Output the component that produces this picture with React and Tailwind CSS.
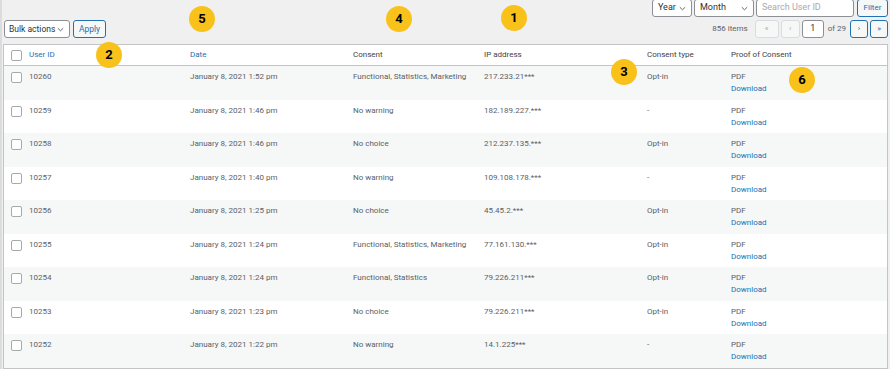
import React from 'react';

const rows = [
  { id: '10260', date: 'January 8, 2021 1:52 pm', consent: 'Functional, Statistics, Marketing', ip: '217.233.21***', type: 'Opt-in' },
  { id: '10259', date: 'January 8, 2021 1:46 pm', consent: 'No warning', ip: '182.189.227.***', type: '-' },
  { id: '10258', date: 'January 8, 2021 1:46 pm', consent: 'No choice', ip: '212.237.135.***', type: 'Opt-in' },
  { id: '10257', date: 'January 8, 2021 1:40 pm', consent: 'No warning', ip: '109.108.178.***', type: '-' },
  { id: '10256', date: 'January 8, 2021 1:25 pm', consent: 'No choice', ip: '45.45.2.***', type: 'Opt-in' },
  { id: '10255', date: 'January 8, 2021 1:24 pm', consent: 'Functional, Statistics, Marketing', ip: '77.161.130.***', type: 'Opt-in' },
  { id: '10254', date: 'January 8, 2021 1:24 pm', consent: 'Functional, Statistics', ip: '79.226.211***', type: 'Opt-in' },
  { id: '10253', date: 'January 8, 2021 1:23 pm', consent: 'No choice', ip: '79.226.211***', type: 'Opt-in' },
  { id: '10252', date: 'January 8, 2021 1:22 pm', consent: 'No warning', ip: '14.1.225***', type: '-' },
];

// numbered callouts laid over the screenshot
const badges = [
  { n: '1', cls: 'left-[499px] top-[5px]' },
  { n: '2', cls: 'left-[94px] top-[42px]' },
  { n: '3', cls: 'left-[609px] top-[59px]' },
  { n: '4', cls: 'left-[384px] top-[6px]' },
  { n: '5', cls: 'left-[187px] top-[6px]' },
  { n: '6', cls: 'left-[787px] top-[67px]' },
];

const Check = () => (
  <span className="block w-[11px] h-[11px] rounded-[2px] border border-[#a7aaad] bg-white" />
);

const Chevron = () => (
  <svg width="7" height="5" viewBox="0 0 7 5" className="ml-auto shrink-0">
    <path d="M0.8 1.2 L3.5 3.8 L6.2 1.2" fill="none" stroke="#50575e" strokeWidth="0.9" />
  </svg>
);

const App = () => {
  return (
    <div className="relative w-[890px] h-[369px] overflow-hidden bg-[#f0f0f1] text-[8px] text-[#5b6167] border-l-2 border-[#dcdcde]" style={{ fontFamily: 'Roboto, "Liberation Sans", sans-serif' }}>
      {/* toolbar */}
      <div className="flex justify-between h-[44px] pl-[2px] pr-[2px] text-[9px] whitespace-nowrap">
        <div className="flex items-start gap-[3px] pt-[20px]">
          <div className="flex items-center w-[66px] h-[18px] pl-[4px] pr-[5px] gap-[2px] bg-white border border-[#8c8f94] rounded-[3px] text-[#2c3338] text-[8.5px]">
            Bulk actions
            <Chevron />
          </div>
          <div className="flex items-center justify-center w-[33px] h-[18px] border border-[#2271b1] rounded-[3px] text-[#2271b1] bg-[#f6f7f7] text-[8.5px]">Apply</div>
        </div>
        <div className="flex flex-col items-end gap-[3px] -mt-[1px]">
          <div className="flex gap-[2px] h-[18px]">
            <div className="flex items-center w-[40px] px-[5px] bg-white border border-[#8c8f94] rounded-[3px] text-[#2c3338]">Year<Chevron /></div>
            <div className="flex items-center w-[60px] px-[5px] bg-white border border-[#8c8f94] rounded-[3px] text-[#2c3338]">Month<Chevron /></div>
            <div className="flex items-center w-[98px] px-[5px] bg-white border border-[#8c8f94] rounded-[3px] text-[#a7aaad]">Search User ID</div>
            <div className="flex items-center justify-center w-[31px] ml-[1px] border border-[#2271b1] rounded-[3px] text-[#2271b1] bg-[#f6f7f7] text-[8px]">Filter</div>
          </div>
          <div className="flex items-center gap-[2px] h-[18px] text-[8px]">
            <span className="mr-[5px]">856 items</span>
            <div className="flex items-center justify-center w-[24px] h-[18px] border border-[#dcdcde] rounded-[3px] bg-[#f6f7f7] text-[#a7aaad]">«</div>
            <div className="flex items-center justify-center w-[19px] h-[18px] border border-[#dcdcde] rounded-[3px] bg-[#f6f7f7] text-[#a7aaad]">‹</div>
            <div className="flex items-center justify-center w-[22px] h-[18px] border border-[#8c8f94] rounded-[3px] bg-white text-[#2c3338] text-[9px]">1</div>
            <span className="ml-[2px] mr-[2px]">of 29</span>
            <div className="flex items-center justify-center w-[18px] h-[18px] border border-[#2271b1] rounded-[3px] text-[#2271b1] bg-[#f6f7f7]">›</div>
            <div className="flex items-center justify-center w-[18px] h-[18px] border border-[#2271b1] rounded-[3px] text-[#2271b1] bg-[#f6f7f7]">»</div>
          </div>
        </div>
      </div>

      {/* table */}
      <div className="ml-[1px] w-[885px] border border-[#c3c4c7] bg-white">
        <div className="flex items-center h-[21px] border-b border-[#c3c4c7] text-[#3c434a]">
          <div className="w-[25px] pl-[7px]"><Check /></div>
          <div className="w-[161px] text-[#2271b1]">User ID</div>
          <div className="w-[163px] text-[#2271b1]">Date</div>
          <div className="w-[131px]">Consent</div>
          <div className="w-[163px]">IP address</div>
          <div className="w-[84px]">Consent type</div>
          <div>Proof of Consent</div>
        </div>
        {rows.map((r, i) => (
          <div key={r.id} className={`flex items-start h-[33.5px] pt-[5px] leading-[12px] ${i % 2 === 0 ? 'bg-[#f6f7f7]' : 'bg-white'}`}>
            <div className="w-[25px] pl-[7px] pt-[1px]"><Check /></div>
            <div className="w-[161px]">{r.id}</div>
            <div className="w-[163px]">{r.date}</div>
            <div className="w-[131px]">{r.consent}</div>
            <div className="w-[163px]">{r.ip}</div>
            <div className="w-[84px]">{r.type}</div>
            <div className="flex flex-col">
              <span>PDF</span>
              <span className="text-[#2271b1]">Download</span>
            </div>
          </div>
        ))}
      </div>

      {badges.map((b) => (
        <div key={b.n} className={`absolute ${b.cls} w-[26px] h-[26px] rounded-full bg-[#f9c21b] flex items-center justify-center text-[13px] font-bold text-black`}>
          {b.n}
        </div>
      ))}
    </div>
  );
};

export default App;
